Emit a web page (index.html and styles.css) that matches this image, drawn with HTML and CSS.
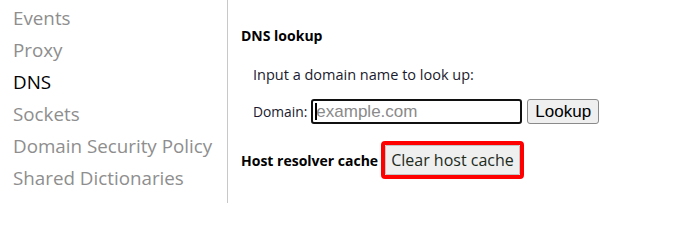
FILE: index.html
```html
<!DOCTYPE html>
<html>
<head>
<meta charset="utf-8">
<link rel="stylesheet" href="styles.css">
</head>
<body>
<div class="page">
  <nav class="sidebar">
    <div class="nav-item">Events</div>
    <div class="nav-item">Proxy</div>
    <div class="nav-item active">DNS</div>
    <div class="nav-item">Sockets</div>
    <div class="nav-item">Domain Security Policy</div>
    <div class="nav-item">Shared Dictionaries</div>
  </nav>
  <main class="content">
    <h2 class="section-title">DNS lookup</h2>
    <div class="lookup">
      <p class="hint">Input a domain name to look up:</p>
      <div class="form-row">
        <label class="label">Domain:</label>
        <span class="input-wrap">
          <input class="text-input" type="text" placeholder="example.com">
          <span class="caret"></span>
        </span>
        <button class="btn">Lookup</button>
      </div>
    </div>
    <div class="cache-row">
      <span class="section-title inline">Host resolver cache</span>
      <span class="highlight"><button class="btn btn-large">Clear host cache</button></span>
    </div>
  </main>
</div>
</body>
</html>
```
FILE: styles.css
```css
html, body {
  margin: 0;
  padding: 0;
  background: #fff;
}
.page {
  display: flex;
  width: 695px;
  height: 203px;
  overflow: hidden;
  font-family: "Open Sans", "Noto Sans", sans-serif;
}
.sidebar {
  width: 214px;
  padding-left: 13px;
  border-right: 1px solid #c8c8c8;
  padding-top: 2px;
}
.nav-item {
  font-size: 18.8px;
  line-height: 32px;
  color: #8e8e8e;
  white-space: nowrap;
}
.nav-item.active {
  color: #000;
}
.content {
  padding-left: 13px;
  padding-top: 26px;
}
.section-title {
  font-size: 14px;
  font-weight: 700;
  color: #000;
  margin: 0;
  line-height: 19px;
}
.lookup {
  padding-left: 12px;
  margin-top: 20px;
}
.hint {
  margin: 0;
  font-size: 14.5px;
  line-height: 20px;
  color: #1a1a2e;
}
.form-row {
  display: flex;
  align-items: center;
  margin-top: 14px;
}
.label {
  font-size: 13.8px;
  color: #1a1a2e;
  margin-right: 4px;
}
.input-wrap {
  position: relative;
  display: inline-block;
}
.text-input {
  box-sizing: border-box;
  width: 211px;
  height: 25px;
  border: 2px solid #101010;
  border-radius: 3px;
  padding: 0 3px;
  font-family: "Liberation Sans", Arial, sans-serif;
  font-size: 17px;
  outline: none;
  margin: 0;
  display: block;
}
.text-input::placeholder {
  color: #8a8a8a;
}
.caret {
  position: absolute;
  left: 4px;
  top: 4px;
  width: 2px;
  height: 17px;
  background: #000;
}
.btn {
  box-sizing: border-box;
  margin: 0 0 0 5px;
  height: 25px;
  padding: 0 7px;
  background: #efefef;
  border: 1px solid #8a8a8a;
  border-radius: 3px;
  font-family: "Liberation Sans", Arial, sans-serif;
  font-size: 17px;
  color: #000;
}
.cache-row {
  display: flex;
  align-items: center;
  margin-top: 17px;
}
.section-title.inline {
  margin-right: 3px;
}
.highlight {
  display: inline-flex;
  border: 4px solid #ff0000;
  border-radius: 4px;
}
.btn-large {
  margin: 0;
  height: 30px;
  padding: 0 5px;
  font-family: "Open Sans", "Noto Sans", sans-serif;
  font-size: 16px;
  border: 1px solid #c4c4c4;
  border-radius: 1px;
  color: #1c2a1c;
}
```
